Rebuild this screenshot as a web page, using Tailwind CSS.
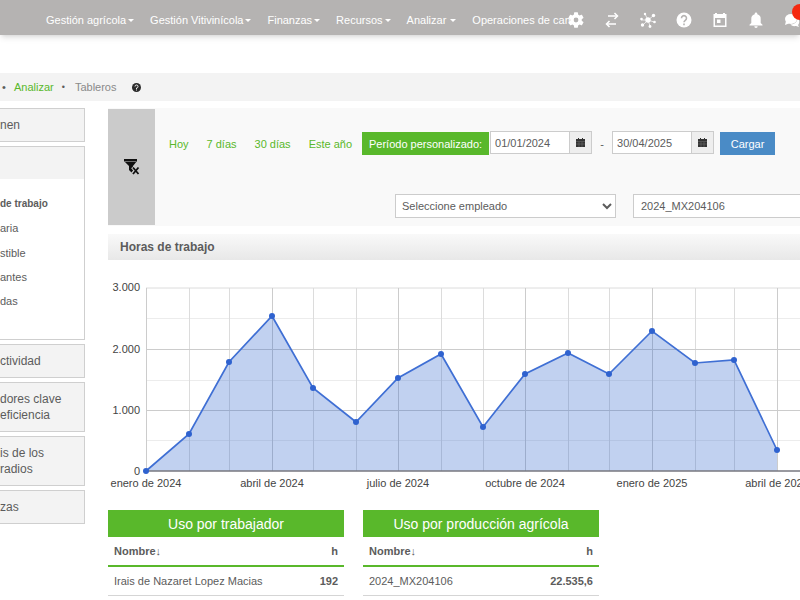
<!doctype html>
<html lang="es">
  <head>
    <meta charset="UTF-8" />
    <meta name="viewport" content="width=device-width, initial-scale=1.0" />
    <title>Tableros - Horas de trabajo</title>
    <script src="https://cdn.jsdelivr.net/npm/@tailwindcss/browser@4"></script>
  </head>

  <body
    class="min-h-screen overflow-x-hidden bg-white font-['Liberation_Sans',Arial,sans-serif] text-[11px] leading-4 text-[#5c5c5c]"
  >
    <!-- Top bar -->
    <header
      class="flex h-[35px] items-center overflow-hidden bg-[#b5b3b2] pt-1 text-white shadow-md"
    >
      <nav class="flex min-w-0 flex-1 gap-4 pl-[46px] whitespace-nowrap">
        <a href="#" class="flex items-center gap-0.5">Gestión agrícola
          <svg class="h-1 w-1.5" viewBox="0 0 6 4" fill="currentColor"><path d="M0 1h6L3 4z" /></svg></a>
        <a href="#" class="flex items-center gap-0.5">Gestión Vitivinícola
          <svg class="h-1 w-1.5" viewBox="0 0 6 4" fill="currentColor"><path d="M0 1h6L3 4z" /></svg></a>
        <a href="#" class="flex items-center gap-0.5">Finanzas
          <svg class="h-1 w-1.5" viewBox="0 0 6 4" fill="currentColor"><path d="M0 1h6L3 4z" /></svg></a>
        <a href="#" class="flex items-center gap-0.5">Recursos
          <svg class="h-1 w-1.5" viewBox="0 0 6 4" fill="currentColor"><path d="M0 1h6L3 4z" /></svg></a>
        <a href="#" class="flex items-center gap-1">Analizar
          <svg class="h-1 w-1.5" viewBox="0 0 6 4" fill="currentColor"><path d="M0 1h6L3 4z" /></svg></a>
        <a href="#">Operaciones de cam</a>
      </nav>
      <div class="flex shrink-0 gap-5">
        <button type="button" aria-label="Configuración">
          <svg class="size-4" viewBox="2 2 20 20" fill="currentColor">
            <path
              fill-rule="evenodd"
              d="M19.14 12.94a7 7 0 0 0 0-1.88l2.03-1.58a.5.5 0 0 0 .12-.61l-1.92-3.32a.5.5 0 0 0-.59-.22l-2.39.96a7 7 0 0 0-1.62-.94l-.36-2.54a.5.5 0 0 0-.48-.41h-3.84a.5.5 0 0 0-.47.41l-.36 2.54a7 7 0 0 0-1.62.94l-2.39-.96a.5.5 0 0 0-.59.22L2.74 8.87a.5.5 0 0 0 .12.61l2.03 1.58a7 7 0 0 0 0 1.88l-2.03 1.58a.5.5 0 0 0-.12.61l1.92 3.32c.12.22.37.29.59.22l2.39-.96c.5.38 1.03.7 1.62.94l.36 2.54c.05.24.24.41.48.41h3.84c.24 0 .44-.17.47-.41l.36-2.54a7 7 0 0 0 1.62-.94l2.39.96c.22.08.47 0 .59-.22l1.92-3.32a.5.5 0 0 0-.12-.61zM12 15a3 3 0 1 1 0-6 3 3 0 0 1 0 6z"
            />
          </svg>
        </button>
        <button type="button" aria-label="Intercambiar">
          <svg class="size-4" viewBox="0 0 16 16" fill="none" stroke="currentColor" stroke-width="1.500">
            <path d="M4 4h9M12 12H3" />
            <path d="M10.500 1l3 3-3 3M5.500 9l-3 3 3 3" />
          </svg>
        </button>
        <button type="button" aria-label="Conexiones">
          <svg class="size-4" viewBox="0 0 16 16" fill="currentColor">
            <path
              d="M8 8L5 2M8 8l5-4M8 8H1M8 8l6 2M8 8l2 6M8 8l-5 5"
              stroke="currentColor"
              stroke-width=".7"
            />
            <circle cx="8" cy="8" r="2.700" />
            <circle cx="5" cy="2" r="1.200" />
            <circle cx="13.500" cy="3.500" r="1.700" />
            <circle cx="1.500" cy="7" r="1.300" />
            <circle cx="14.500" cy="10" r="1.300" />
            <circle cx="10" cy="14.500" r="1.400" />
            <circle cx="2.500" cy="13" r="1.700" />
          </svg>
        </button>
        <button type="button" aria-label="Ayuda">
          <svg class="size-4" viewBox="0 0 16 16">
            <circle cx="8" cy="8" r="7.500" fill="currentColor" />
            <path
              d="M5.500 6.200a2.500 2.500 0 1 1 3.800 2.100C8.400 8.900 8 9.200 8 10.300M8 11.500v1.800"
              fill="none"
              stroke="#b5b3b2"
              stroke-width="1.600"
            />
          </svg>
        </button>
        <button type="button" aria-label="Calendario">
          <svg class="size-4" viewBox="0 0 16 16" fill="currentColor">
            <path
              fill-rule="evenodd"
              d="M3 1h2v1h6V1h2v1h1.500v13h-13V2H3zM3 6v7.500h10V6z"
            />
            <path d="M5 7.500h3.500V11H5z" />
          </svg>
        </button>
        <button type="button" aria-label="Notificaciones">
          <svg class="size-4" viewBox="0 0 16 16" fill="currentColor">
            <path
              d="M8 .5a1.300 1.300 0 0 1 1.300 1.300v.4A4.700 4.700 0 0 1 12.700 7v4l1.800 1.800v.7h-13v-.7L3.300 11V7a4.700 4.700 0 0 1 3.400-4.800v-.4A1.300 1.300 0 0 1 8 .5zM6.300 14.200h3.400a1.700 1.700 0 0 1-3.400 0z"
            />
          </svg>
        </button>
        <button type="button" aria-label="Mensajes" class="relative">
          <svg class="size-4" viewBox="0 0 16 16" fill="currentColor">
            <ellipse cx="7" cy="7" rx="6" ry="5" />
            <path d="M2 9l-1 4 5-2zM13.500 6c3 3 1.500 6 .5 7l1 2-3-1c-3 .5-5-.5-5.500-1.500 4.500 0 7-3 7-6.500z" />
          </svg>
          <span class="absolute -top-2 left-2 h-4 w-5 rounded-full bg-[#f5280f]"></span>
        </button>
      </div>
    </header>

    <!-- Breadcrumb -->
    <div class="mt-[38px] flex h-7 items-center bg-[#f3f3f3] pl-0.5">
      <span class="w-3">•</span>
      <a href="#" class="text-[#59b82b]">Analizar</a>
      <span class="px-2 text-[9px]">•</span>
      <span class="pl-0.5 text-[#8a8a8a]">Tableros</span>
      <svg class="ml-4 size-[9px]" viewBox="0 0 9 9">
        <circle cx="4.500" cy="4.500" r="4.500" fill="#2b2b2b" />
        <path d="M3 3.500a1.500 1.500 0 1 1 1.500 1.500v1M4.500 6.500v1" fill="none" stroke="#f3f3f3" />
      </svg>
    </div>

    <div class="flex gap-[23px] pt-[7px]">
      <!-- Side menu -->
      <aside class="flex w-[85px] shrink-0 flex-col gap-1 text-xs">
        <a href="#" class="block border border-l-0 border-[#cfcfcf] bg-[#f3f3f3] py-2">nen</a>
        <div class="border border-l-0 border-[#cfcfcf]">
          <div class="h-8 bg-[#f3f3f3]"></div>
          <ul class="pt-3 pb-[26px] text-[11px] leading-6">
            <li><a href="#" class="text-[10px] font-bold">de trabajo</a></li>
            <li><a href="#">aria</a></li>
            <li class="pt-px"><a href="#">stible</a></li>
            <li><a href="#">antes</a></li>
            <li><a href="#">das</a></li>
          </ul>
        </div>
        <a href="#" class="block border border-l-0 border-[#cfcfcf] bg-[#f3f3f3] py-2">ctividad</a>
        <a href="#" class="block border border-l-0 border-[#cfcfcf] bg-[#f3f3f3] py-2">dores clave<br />eficiencia</a>
        <a href="#" class="block border border-l-0 border-[#cfcfcf] bg-[#f3f3f3] py-2">is de los<br />radios</a>
        <a href="#" class="block border border-l-0 border-[#cfcfcf] bg-[#f3f3f3] py-2">zas</a>
      </aside>

      <main class="min-w-0 flex-1">
        <!-- Filters -->
        <form class="flex overflow-hidden bg-[#f9f9f9] pb-px">
          <button
            type="button"
            aria-label="Quitar filtros"
            class="mt-px flex w-[47px] shrink-0 items-center justify-center bg-[#cbcbcb]"
          >
            <svg class="size-4" viewBox="0 0 16 16" fill="none" stroke="#111">
              <path d="M0 0h13v2L9 7v8L5 11V7L0 2z" fill="#111" stroke="none" />
              <path d="M1 2.500h11" stroke="#999" stroke-width=".7" />
              <path d="M8.500 8l6 7M14.500 8l-6 7" stroke="#cbcbcb" stroke-width="3.500" />
              <path d="M9 8.500l5.500 6.500M14.500 8.500l-5.500 6.500" stroke-width="1.800" />
            </svg>
          </button>
          <div class="min-w-0 flex-1 pt-[23px] pb-[7px]">
            <div class="flex items-center pl-3.5 whitespace-nowrap">
              <a href="#" class="text-[#59b82b]">Hoy</a>
              <a href="#" class="ml-[18px] text-[#59b82b]">7 días</a>
              <a href="#" class="ml-[18px] text-[#59b82b]">30 días</a>
              <a href="#" class="ml-[18px] text-[#59b82b]">Este año</a>
              <button
                type="button"
                class="ml-2.5 h-[23px] w-[127px] shrink-0 bg-[#59b82b] text-white"
              >
                Período personalizado:
              </button>
              <div class="mb-0.5 ml-px flex h-[23px] w-[102px] shrink-0 border border-[#ccc]">
                <input
                  type="text"
                  aria-label="Desde"
                  value="01/01/2024"
                  class="min-w-0 flex-1 bg-white px-1"
                />
                <button
                  type="button"
                  aria-label="Elegir fecha inicial"
                  class="flex w-[22px] items-center justify-center border-l border-[#ccc] bg-[#eee]"
                >
                  <svg class="size-[9px]" viewBox="0 0 9 9">
                    <path d="M0 1h9v8H0zM2 0h1v1H2zM6 0h1v1H6z" fill="#333" />
                    <path d="M0 3.500h9M0 6h9M3 4v5M6 4v5" stroke="#777" stroke-width=".5" />
                  </svg>
                </button>
              </div>
              <span class="w-5 shrink-0 text-center">-</span>
              <div class="mb-0.5 flex h-[23px] w-[102px] shrink-0 border border-[#ccc]">
                <input
                  type="text"
                  aria-label="Hasta"
                  value="30/04/2025"
                  class="min-w-0 flex-1 bg-white px-1"
                />
                <button
                  type="button"
                  aria-label="Elegir fecha final"
                  class="flex w-[22px] items-center justify-center border-l border-[#ccc] bg-[#eee]"
                >
                  <svg class="size-[9px]" viewBox="0 0 9 9">
                    <path d="M0 1h9v8H0zM2 0h1v1H2zM6 0h1v1H6z" fill="#333" />
                    <path d="M0 3.500h9M0 6h9M3 4v5M6 4v5" stroke="#777" stroke-width=".5" />
                  </svg>
                </button>
              </div>
              <button type="submit" class="ml-1.5 h-[23px] w-[55px] shrink-0 bg-[#4a8bc6] text-white">
                Cargar
              </button>
            </div>
            <div class="mt-[38px] flex gap-[17px] pl-[240px]">
              <select
                aria-label="Empleado"
                class="h-6 w-[221px] shrink-0 border border-[#ccc] bg-white px-0.5"
              >
                <option>Seleccione empleado</option>
              </select>
              <select
                aria-label="Producción agrícola"
                class="h-6 min-w-0 flex-1 appearance-none border border-r-0 border-[#ccc] bg-white px-[7px]"
              >
                <option>2024_MX204106</option>
              </select>
            </div>
          </div>
        </form>

        <h2
          class="mt-2 bg-linear-to-b from-[#f9f9f9] to-[#e8e8e8] px-3 py-[5px] text-xs leading-4 font-bold"
        >
          Horas de trabajo
        </h2>

        <!-- Worked hours per month -->
        <svg
          class="mt-0.5 block w-full"
          viewBox="0 0 692 240"
          role="img"
          aria-label="Horas de trabajo por mes"
        >
          <g fill="none" stroke-width="1">
            <path
              stroke="#ececec"
              d="M38 56.500H692M38 118.500H692M38 178.500H692"
            />
            <path
              stroke="#dcdcdc"
              d="M81.500 26V209M121.500 26V209M205.500 26V209M248.500 26V209M333.500 26V209M375.500 26V209M460.500 26V209M501.500 26V209M587.500 26V209M626.500 26V209M38 26H692"
            />
            <path
              stroke="#cccccc"
              d="M38.500 26V209M164.500 26V209M290.500 26V209M417.500 26V209M544.500 26V209M669.500 26V209M38 87.500H692M38 148.500H692"
            />
          </g>
          <polygon
            fill="#3366cc"
            fill-opacity="0.3"
            points="38,209 81,172 121,100 164,54 205,126 248,160 290,116 333,92 375,165 417,112 460,91 501,112 544,69 587,101 626,98 669,188 669,209"
          />
          <path d="M38 209H692" stroke="#77777f" stroke-width="1.500" />
          <polyline
            fill="none"
            stroke="#3f6fd4"
            stroke-width="1.700"
            points="38,209 81,172 121,100 164,54 205,126 248,160 290,116 333,92 375,165 417,112 460,91 501,112 544,69 587,101 626,98 669,188"
          />
          <g fill="#2f62cf">
            <circle cx="38" cy="209" r="3" />
            <circle cx="81" cy="172" r="3" />
            <circle cx="121" cy="100" r="3" />
            <circle cx="164" cy="54" r="3" />
            <circle cx="205" cy="126" r="3" />
            <circle cx="248" cy="160" r="3" />
            <circle cx="290" cy="116" r="3" />
            <circle cx="333" cy="92" r="3" />
            <circle cx="375" cy="165" r="3" />
            <circle cx="417" cy="112" r="3" />
            <circle cx="460" cy="91" r="3" />
            <circle cx="501" cy="112" r="3" />
            <circle cx="544" cy="69" r="3" />
            <circle cx="587" cy="101" r="3" />
            <circle cx="626" cy="98" r="3" />
            <circle cx="669" cy="188" r="3" />
          </g>
          <g fill="#444" font-size="11" text-anchor="end">
            <text x="32" y="29">3.000</text>
            <text x="32" y="91">2.000</text>
            <text x="32" y="152">1.000</text>
            <text x="32" y="213">0</text>
          </g>
          <g fill="#444" font-size="11" text-anchor="middle">
            <text x="38" y="225">enero de 2024</text>
            <text x="164" y="225">abril de 2024</text>
            <text x="290" y="225">julio de 2024</text>
            <text x="417" y="225">octubre de 2024</text>
            <text x="544" y="225">enero de 2025</text>
            <text x="669" y="225">abril de 2025</text>
          </g>
        </svg>

        <!-- Usage tables -->
        <div class="mt-2 flex gap-[19px]">
          <table class="w-[236px]">
            <caption class="bg-[#59b82b] pt-1 pb-[3px] text-sm leading-5 text-white">
              Uso por trabajador
            </caption>
            <thead>
              <tr class="border-b-2 border-[#59b82b]">
                <th class="px-1.5 py-1.5 text-left">Nombre<span class="font-normal">↓</span></th>
                <th class="px-1.5 py-1.5 text-right">h</th>
              </tr>
            </thead>
            <tbody>
              <tr class="border-b border-[#d5d5d5]">
                <td class="px-1.5 py-1.5">Irais de Nazaret Lopez Macias</td>
                <td class="px-1.5 py-1.5 text-right font-bold">192</td>
              </tr>
            </tbody>
          </table>
          <table class="w-[236px]">
            <caption class="bg-[#59b82b] pt-1 pb-[3px] text-sm leading-5 text-white">
              Uso por producción agrícola
            </caption>
            <thead>
              <tr class="border-b-2 border-[#59b82b]">
                <th class="px-1.5 py-1.5 text-left">Nombre<span class="font-normal">↓</span></th>
                <th class="px-1.5 py-1.5 text-right">h</th>
              </tr>
            </thead>
            <tbody>
              <tr class="border-b border-[#d5d5d5]">
                <td class="px-1.5 py-1.5">2024_MX204106</td>
                <td class="px-1.5 py-1.5 text-right font-bold">22.535,6</td>
              </tr>
            </tbody>
          </table>
        </div>
      </main>
    </div>
  </body>
</html>
